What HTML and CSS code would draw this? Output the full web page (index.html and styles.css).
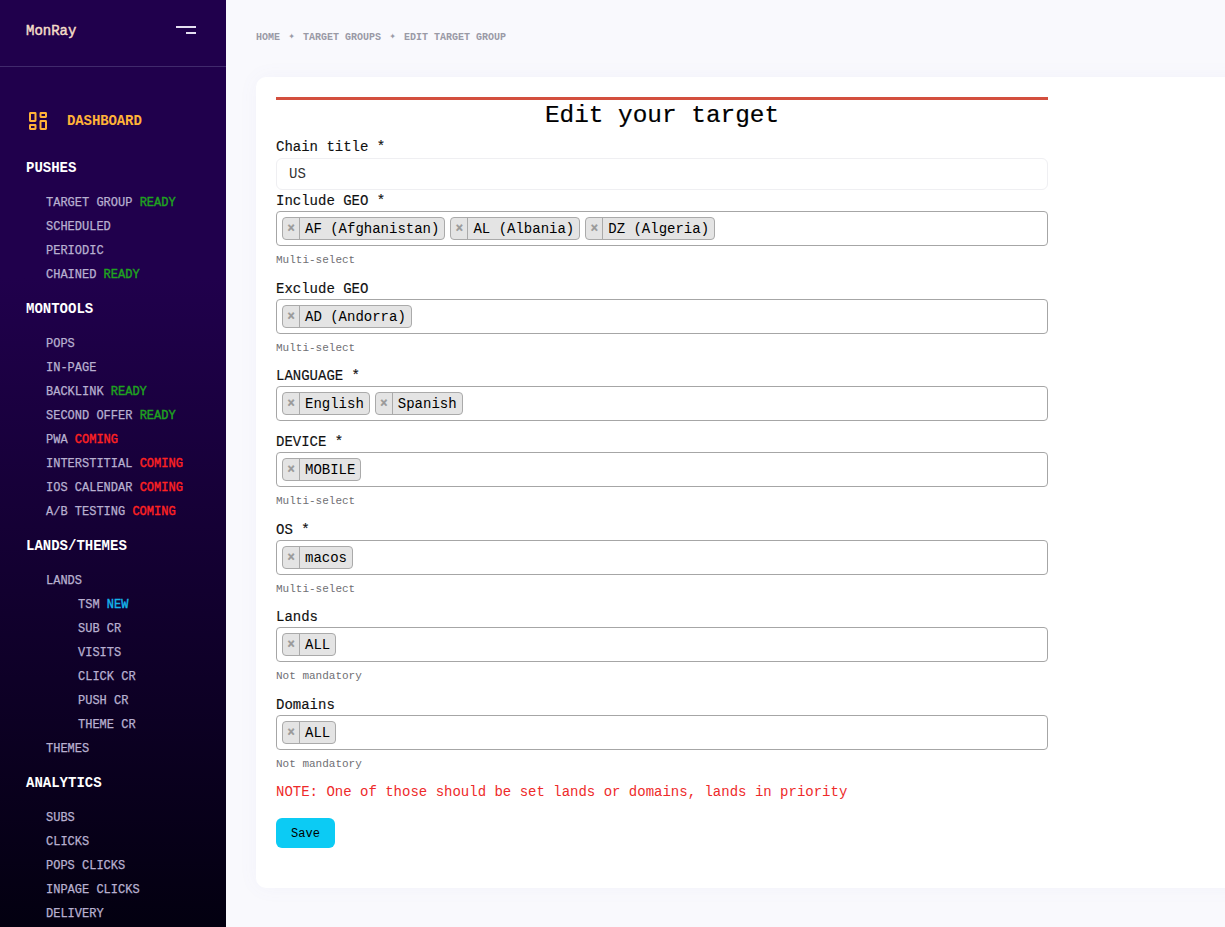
FILE: index.html
```html
<!DOCTYPE html>
<html lang="en">
<head>
<meta charset="utf-8">
<title>Edit target group</title>
<link rel="stylesheet" href="styles.css">
</head>
<body>
<div class="app">
  <aside class="sidebar">
    <div class="brand">
      <span class="brand-name">MonRay</span>
      <span class="burger"><i class="bar-long"></i><i class="bar-short"></i></span>
    </div>
    <nav class="nav">
      <a class="dash">
        <svg class="dash-icon" width="18" height="18" viewBox="0 0 18 18" fill="none" stroke="#ffb238" stroke-width="2">
          <rect x="1" y="1" width="5.5" height="8" rx="0.4"/>
          <rect x="11.5" y="1" width="5.5" height="4" rx="0.4"/>
          <rect x="1" y="13" width="5.5" height="4" rx="0.4"/>
          <rect x="11.5" y="9" width="5.5" height="8" rx="0.4"/>
        </svg>
        <span>DASHBOARD</span>
      </a>
      <div class="section">PUSHES</div>
      <ul class="items">
        <li>TARGET GROUP <b class="ready">READY</b></li>
        <li>SCHEDULED</li>
        <li>PERIODIC</li>
        <li>CHAINED <b class="ready">READY</b></li>
      </ul>
      <div class="section">MONTOOLS</div>
      <ul class="items">
        <li>POPS</li>
        <li>IN-PAGE</li>
        <li>BACKLINK <b class="ready">READY</b></li>
        <li>SECOND OFFER <b class="ready">READY</b></li>
        <li>PWA <b class="coming">COMING</b></li>
        <li>INTERSTITIAL <b class="coming">COMING</b></li>
        <li>IOS CALENDAR <b class="coming">COMING</b></li>
        <li>A/B TESTING <b class="coming">COMING</b></li>
      </ul>
      <div class="section">LANDS/THEMES</div>
      <ul class="items">
        <li>LANDS</li>
        <li class="sub">TSM <b class="new">NEW</b></li>
        <li class="sub">SUB CR</li>
        <li class="sub">VISITS</li>
        <li class="sub">CLICK CR</li>
        <li class="sub">PUSH CR</li>
        <li class="sub">THEME CR</li>
        <li>THEMES</li>
      </ul>
      <div class="section">ANALYTICS</div>
      <ul class="items">
        <li>SUBS</li>
        <li>CLICKS</li>
        <li>POPS CLICKS</li>
        <li>INPAGE CLICKS</li>
        <li>DELIVERY</li>
      </ul>
    </nav>
  </aside>
  <main class="main">
    <div class="crumbs">
      <span>HOME</span><span class="sep">✦</span><span>TARGET GROUPS</span><span class="sep">✦</span><span>EDIT TARGET GROUP</span>
    </div>
    <section class="card">
      <form class="form">
        <h1 class="title">Edit your target</h1>
        <label class="label">Chain title *</label>
        <div class="input">US</div>

        <label class="label">Include GEO *</label>
        <div class="select">
          <span class="chip"><span class="x">×</span><span class="chip-text">AF (Afghanistan)</span></span>
          <span class="chip"><span class="x">×</span><span class="chip-text">AL (Albania)</span></span>
          <span class="chip"><span class="x">×</span><span class="chip-text">DZ (Algeria)</span></span>
        </div>
        <p class="help">Multi-select</p>

        <label class="label">Exclude GEO</label>
        <div class="select">
          <span class="chip"><span class="x">×</span><span class="chip-text">AD (Andorra)</span></span>
        </div>
        <p class="help">Multi-select</p>

        <label class="label">LANGUAGE *</label>
        <div class="select">
          <span class="chip"><span class="x">×</span><span class="chip-text">English</span></span>
          <span class="chip"><span class="x">×</span><span class="chip-text">Spanish</span></span>
        </div>
        <div class="nohelp"></div>

        <label class="label">DEVICE *</label>
        <div class="select">
          <span class="chip"><span class="x">×</span><span class="chip-text">MOBILE</span></span>
        </div>
        <p class="help">Multi-select</p>

        <label class="label">OS *</label>
        <div class="select">
          <span class="chip"><span class="x">×</span><span class="chip-text">macos</span></span>
        </div>
        <p class="help">Multi-select</p>

        <label class="label">Lands</label>
        <div class="select">
          <span class="chip"><span class="x">×</span><span class="chip-text">ALL</span></span>
        </div>
        <p class="help">Not mandatory</p>

        <label class="label">Domains</label>
        <div class="select">
          <span class="chip"><span class="x">×</span><span class="chip-text">ALL</span></span>
        </div>
        <p class="help">Not mandatory</p>

        <p class="note">NOTE: One of those should be set lands or domains, lands in priority</p>
        <button class="save" type="button">Save</button>
      </form>
    </section>
  </main>
</div>
</body>
</html>
```
FILE: styles.css
```css
* { box-sizing: border-box; }
html, body { margin: 0; padding: 0; height: 100%; overflow: hidden; }
body {
  font-family: "Liberation Mono", "DejaVu Sans Mono", monospace;
  background: #f9f9fd;
  color: #000;
}
.app { display: flex; height: 927px; overflow: hidden; }

.sidebar {
  flex: 0 0 226px;
  width: 226px;
  background: linear-gradient(180deg, #20004c 0%, #20004c 30%, #030010 100%);
  overflow: hidden;
}
.brand {
  height: 67px;
  padding: 0 30px 4px 26px;
  display: flex;
  align-items: center;
  justify-content: space-between;
  border-bottom: 1px solid #40296c;
}
.brand-name { font-size: 14px; color: #f4dcc8; -webkit-text-stroke: 0.45px #f4dcc8; }
.burger { display: flex; flex-direction: column; align-items: flex-end; gap: 4px; width: 20px; margin-top: -2px; }
.burger i { display: block; height: 2px; background: #e4def0; }
.bar-long { width: 20px; }
.bar-short { width: 10px; }

.nav { padding-top: 34px; }
.dash {
  display: flex;
  align-items: center;
  gap: 20px;
  height: 40px;
  padding-left: 29px;
  margin-bottom: 4.5px;
  color: #ffb238;
  font-size: 14px;
  font-weight: 700;
  letter-spacing: -0.1px;
}
.section {
  padding: 12px 0 12px 26px;
  font-size: 14px;
  line-height: 21px;
  font-weight: 700;
  color: #fff;
}
.items { list-style: none; margin: 0; padding: 0; }
.items li {
  height: 24px;
  line-height: 24px;
  padding-left: 46px;
  font-size: 12px;
  color: #b8b0d0;
  white-space: nowrap;
  -webkit-text-stroke: 0.25px currentColor;
}
.items li.sub { padding-left: 78px; }
.items b { font-weight: 400; -webkit-text-stroke: 0.4px currentColor; }
.ready { color: #1fa31f; }
.coming { color: #ff2222; }
.new { color: #14b4ea; }

.main { flex: 1; min-width: 0; padding-left: 30px; }
.crumbs {
  height: 77px;
  padding-top: 30px;
  font-size: 10px;
  line-height: 14px;
  font-weight: 700;
  color: #9a9aa6;
  white-space: nowrap;
}
.sep { display: inline-block; width: 23px; text-align: center; font-size: 8px; font-family: "DejaVu Sans", sans-serif; vertical-align: 1px; }

.card {
  margin-right: -20px;
  height: 811px;
  padding: 20px;
  background: #fff;
  border-radius: 10px;
  box-shadow: 0 0 20px rgba(120, 120, 200, 0.05);
}
.form { width: 772px; }
.title {
  margin: 0;
  border-top: 3px solid #d34f3e;
  height: 40px;
  font-size: 24.4px;
  line-height: 31px;
  font-weight: 400;
  text-align: center;
  -webkit-text-stroke: 0.2px currentColor;
}
.label {
  display: block;
  height: 20px;
  font-size: 14px;
  line-height: 20px;
  color: #111;
  -webkit-text-stroke: 0.15px currentColor;
}
.input {
  height: 32px;
  margin-top: 1px;
  margin-bottom: 1px;
  padding: 0 12px;
  border: 1px solid #efeff2;
  border-radius: 6px;
  font-size: 14px;
  line-height: 30px;
  color: #333;
}
.select {
  display: flex;
  gap: 5px;
  height: 35px;
  padding: 5px;
  border: 1px solid #a6a6a6;
  border-radius: 4px;
}
.chip {
  display: flex;
  height: 23px;
  border: 1px solid #aaa;
  border-radius: 4px;
  background: #e4e4e4;
  font-size: 14px;
  line-height: 22px;
  color: #000;
}
.x {
  width: 17px;
  border-right: 1px solid #aaa;
  text-align: center;
  font-size: 12px;
  font-weight: 700;
  color: #999;
  -webkit-text-stroke: 0.4px currentColor;
}
.chip-text { padding: 0 5px; }
.help {
  margin: 6px 0 10px;
  font-size: 11px;
  line-height: 16.6px;
  color: #6f6f74;
}
.nohelp { height: 11px; }
.note {
  margin: 0;
  height: 35px;
  font-size: 14px;
  line-height: 19px;
  color: #ee2a2a;
}
.save {
  display: block;
  width: 59px;
  height: 30px;
  padding: 2px 0 0;
  border: 0;
  border-radius: 6px;
  background: #0ccbf4;
  font-family: inherit;
  font-size: 12px;
  color: #000;
}
```
